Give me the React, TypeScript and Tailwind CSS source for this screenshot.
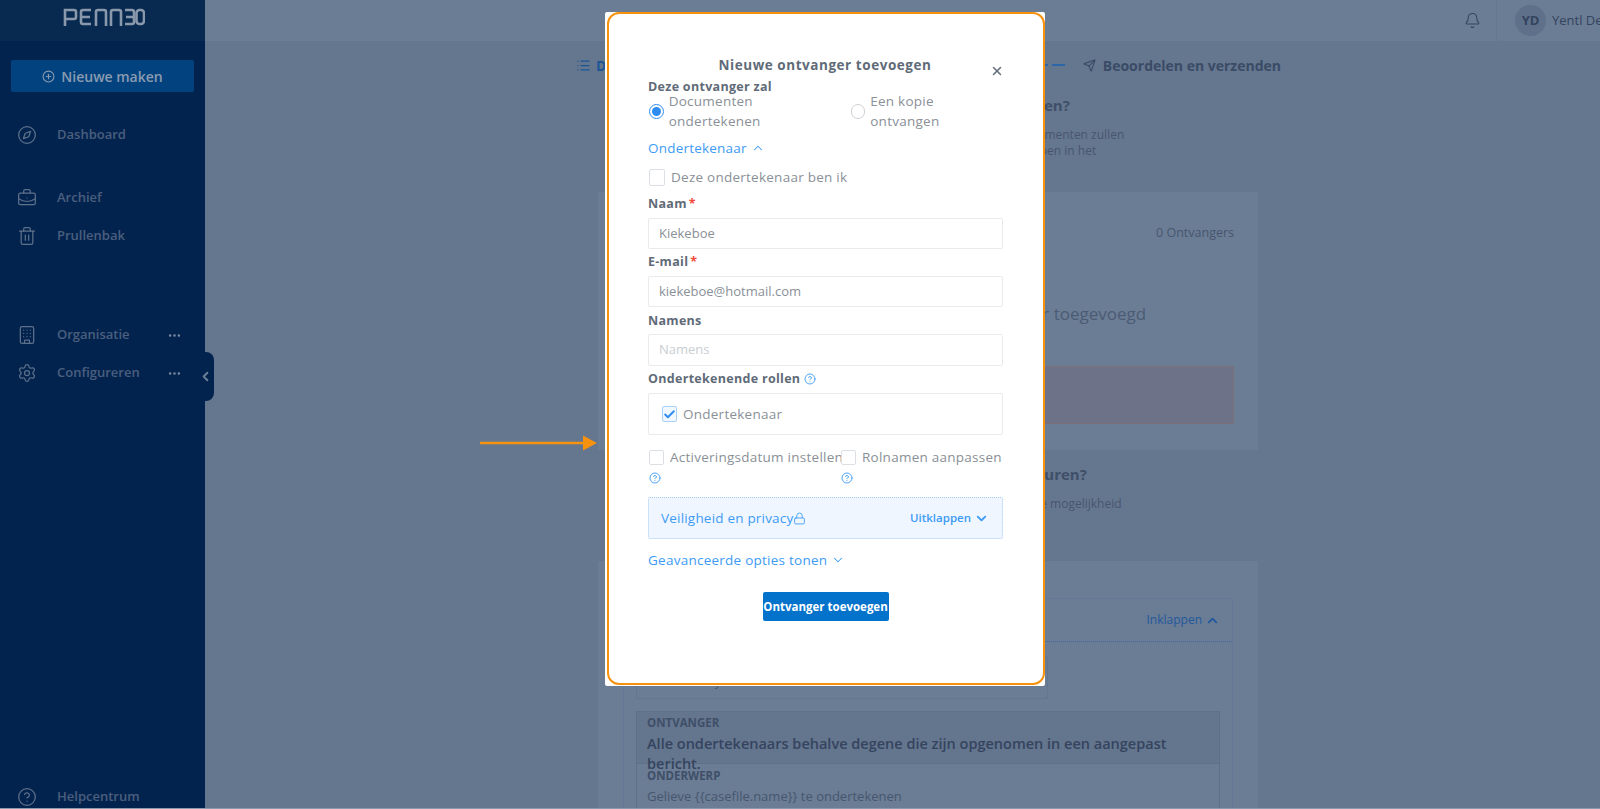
import React from "react";
import {
  Bell,
  BriefcaseBusiness,
  Building,
  Check,
  ChevronDown,
  ChevronLeft,
  ChevronUp,
  CircleHelp,
  CirclePlus,
  Compass,
  Ellipsis,
  List,
  Lock,
  Send,
  Settings,
  Trash2,
  X,
} from "lucide-react";

const Logo = () => (
  <svg width="82" height="18" viewBox="0 0 82 18" fill="none" stroke="#8a98ab" strokeWidth="2.6">
    <path d="M2 18V2h9a2 2 0 0 1 2 2v5a2 2 0 0 1-2 2H2" />
    <path d="M28 2h-8a2 2 0 0 0-2 2v10a2 2 0 0 0 2 2h8M18 9h9" />
    <path d="M33 18V4a2 2 0 0 1 2-2h6a2 2 0 0 1 2 2v14" />
    <path d="M48 18V4a2 2 0 0 1 2-2h6a2 2 0 0 1 2 2v14" />
    <path d="M62 2h7a2 2 0 0 1 2 2v10a2 2 0 0 1-2 2h-7M63 9h7" />
    <rect x="73.5" y="2" width="7.5" height="14" rx="3" />
  </svg>
);

const NavItem = ({
  icon,
  label,
  more,
  className,
}: {
  icon: React.ReactNode;
  label: string;
  more?: boolean;
  className?: string;
}) => (
  <div className={`flex h-5 items-center text-[13px] font-semibold text-[#4a5f7d] ${className ?? ""}`}>
    <span className="flex w-[57px] justify-center pl-[10px] pr-[13px] text-[#5d7089]">{icon}</span>
    <span>{label}</span>
    {more && <Ellipsis size={15} className="ml-auto mr-[23px] text-[#7a899d]" />}
  </div>
);

const Sidebar = () => (
  <aside className="relative z-10 flex w-[205px] shrink-0 flex-col bg-[#03234f]">
    <div className="flex h-[41px] items-center justify-center bg-[#082a50] pb-[8px] pl-[2px]">
      <Logo />
    </div>
    <button className="mx-[11px] mt-[19px] flex h-[32px] items-center justify-center gap-[6px] rounded-[2px] bg-[#02437f] text-[14px] font-semibold text-[#8a9bb0]">
      <CirclePlus size={13} />
      Nieuwe maken
    </button>
    <NavItem className="mt-[33px]" icon={<Compass size={20} strokeWidth={1.5} />} label="Dashboard" />
    <NavItem className="mt-[43px]" icon={<BriefcaseBusiness size={20} strokeWidth={1.5} />} label="Archief" />
    <NavItem className="mt-[18px]" icon={<Trash2 size={20} strokeWidth={1.5} />} label="Prullenbak" />
    <NavItem className="mt-[79px]" icon={<Building size={20} strokeWidth={1.5} />} label="Organisatie" more />
    <NavItem className="mt-[18px]" icon={<Settings size={20} strokeWidth={1.5} />} label="Configureren" more />
    <NavItem className="mt-auto mb-[1px]" icon={<CircleHelp size={20} strokeWidth={1.5} />} label="Helpcentrum" />
    <div className="absolute left-[196px] top-[352px] flex h-[49px] w-[18px] items-center justify-center rounded-r-[8px] bg-[#03234f] text-[#6d7f97]">
      <ChevronLeft size={15} strokeWidth={3} />
    </div>
  </aside>
);

const TopBar = () => (
  <header className="flex h-[41px] shrink-0 items-center bg-[#6b7d95]">
    <Bell size={17} strokeWidth={1.5} className="ml-auto text-[#34445e]" />
    <div className="ml-[15px] flex h-full items-center gap-[6px] border-l border-[#65768f] pl-[18px]">
      <span className="flex h-[31px] w-[31px] items-center justify-center rounded-full bg-[#5f708a] text-[13px] font-bold text-[#34445e]">
        YD
      </span>
      <span className="w-[48px] overflow-hidden whitespace-nowrap text-[13px] text-[#34445e]">Yentl De Smet</span>
    </div>
  </header>
);

const BackgroundContent = () => (
  <div className="ml-[393px] w-[660px] text-[#3f4f68]">
    <div className="relative -left-[22px] mt-[12px] flex h-[24px] w-[705px] items-center text-[14px] font-bold text-[#1a5596]">
      <List size={15} className="mr-[5px]" />
      <span>Documenten</span>
      <div className="ml-auto mr-[18px] flex gap-[4px]">
        <span className="h-[2px] w-[13px] bg-[#2a66a8]" />
        <span className="h-[2px] w-[13px] bg-[#2a66a8]" />
      </div>
      <Send size={13} className="mr-[7px] text-[#3a4b66]" />
      <span className="text-[#3a4b66]">Beoordelen en verzenden</span>
    </div>
    <h2 className="mt-[17px] h-[22px] text-center text-[15px] font-bold leading-[22px]">Wie moet de documenten ontvangen?</h2>
    <p className="mt-[11px] text-center text-[12px] leading-[16px] text-[#47566e]">
      De ontvangers kunnen de documenten zien, en de documenten zullen
      <br />
      worden verzonden naar iedereen die toegang hebben in het
    </p>
    <section className="mt-[33px] h-[258px] bg-[#6b7d95] px-[24px] pt-[33px]">
      <div className="h-[16px] text-right text-[12.5px] leading-[16px] text-[#47566e]">0 Ontvangers</div>
      <div className="mt-[60px] h-[26px] text-center text-[17px] leading-[26px] text-[#4c5b74]">
        Er zijn nog geen ontvangers aan dit dossier toegevoegd
      </div>
      <div className="mt-[39px] h-[58px] rounded-[2px] border border-[#7d6f77] bg-[#6e7289]" />
    </section>
    <h2 className="mt-[13px] h-[22px] text-center text-[15px] font-bold leading-[22px]">Welke berichten wilt u ontvangers sturen?</h2>
    <p className="mt-[11px] text-center text-[12px] leading-[16px] text-[#47566e]">
      U kunt een bericht instellen en de ontvangers krijgen de mogelijkheid
      <br />
      om het bericht aan te passen als ze
    </p>
    <section className="mt-[33px] h-[300px] bg-[#6b7d95] px-[25px] pt-[37px]">
      <div className="h-[280px] rounded-t-[2px] border-x border-t border-[#64779a]">
        <div className="flex h-[43px] items-center justify-end gap-[3px] border-b border-dotted border-[#3f6a9f] pr-[12px] text-[12px] text-[#22589c]">
          Inklappen
          <ChevronUp size={15} strokeWidth={3} />
        </div>
        <div className="px-[12px] pt-[15px]">
          <div className="flex h-[42px] w-[412px] items-center rounded-[2px] border border-[#64758e] px-[10px] pt-[8px] text-[13px] text-[#47566e]">
            Standaardsjabloon
          </div>
          <div className="mt-[12px] border border-[#5f7189]">
            <div className="h-[51px] bg-[#64758e] px-[10px] pt-[3px]">
              <div className="h-[16px] text-[11.5px] font-bold leading-[16px]">ONTVANGER</div>
              <div className="mt-[3px] text-[14.5px] font-semibold leading-[20px] text-[#35445e]">
                Alle ondertekenaars behalve degene die zijn opgenomen in een aangepast bericht.
              </div>
            </div>
            <div className="h-[60px] border-t border-[#5f7189] px-[10px] pt-[4px]">
              <div className="h-[16px] text-[11.5px] font-bold leading-[16px]">ONDERWERP</div>
              <div className="mt-[3px] text-[13px] leading-[18px] text-[#47566e]">Gelieve {"{{casefile.name}}"} te ondertekenen</div>
            </div>
          </div>
        </div>
      </div>
    </section>
  </div>
);

const FieldLabel = ({ children, required, className }: { children: React.ReactNode; required?: boolean; className?: string }) => (
  <div className={`flex h-[18px] items-center gap-[2px] text-[12.5px] font-bold leading-[18px] tracking-[0.3px] text-[#5f6b78] ${className ?? ""}`}>
    {children}
    {required && <span className="text-[#f2493a]">*</span>}
  </div>
);

const TextField = ({ value, placeholder, className }: { value?: string; placeholder?: boolean; className?: string }) => (
  <div
    className={`flex items-center rounded-[2px] border border-[#e8eaec] px-[10px] text-[13px] ${
      placeholder ? "text-[#c9ced3]" : "text-[#8a9097]"
    } ${className ?? ""}`}
  >
    {value}
  </div>
);

const Box = ({ checked, className }: { checked?: boolean; className?: string }) => (
  <span
    className={`flex shrink-0 items-center justify-center rounded-[2px] border ${
      checked ? "border-[#a8d0f8] bg-[#f2f8ff]" : "border-[#dcdfe3] bg-white"
    } ${className ?? ""}`}
  >
    {checked && <Check size={13} strokeWidth={3.5} className="text-[#2f8cf0]" />}
  </span>
);

const Help = ({ className }: { className?: string }) => (
  <CircleHelp size={12} strokeWidth={1.8} className={`text-[#3d9bf5] ${className ?? ""}`} />
);

const RecipientModal = () => (
  <div className="absolute left-[605px] top-[12px] z-20 h-[674px] w-[440px] rounded-[2px] bg-white pl-[43px] pr-[42px] pt-[42px] font-['Open_Sans',sans-serif]">
    <h1 className="h-[22px] pr-[1px] text-center text-[13.5px] font-bold leading-[22px] tracking-[0.55px] text-[#5f6b78]">
      Nieuwe ontvanger toevoegen
    </h1>
    <X size={14} strokeWidth={2.5} className="absolute left-[385px] top-[52px] text-[#5f6b78]" />
    <FieldLabel className="mt-[2px]">Deze ontvanger zal</FieldLabel>
    <div className="mt-[5px] flex h-[20px] items-center text-[13.5px] tracking-[0.25px] text-[#8a9097]">
      <span className="ml-[1px] mr-[5px] flex h-[15px] w-[15px] items-center justify-center rounded-full border-[1.5px] border-[#2f8cf0]">
        <span className="h-[9px] w-[9px] rounded-full bg-[#2f8cf0]" />
      </span>
      <span>Documenten ondertekenen</span>
      <span className="ml-[7px] mr-[5px] h-[15px] w-[15px] rounded-full border-[1.5px] border-[#ccd0d4]" />
      <span>Een kopie ontvangen</span>
    </div>
    <div className="mt-[17px] flex h-[20px] items-center gap-[4px] text-[13.5px] tracking-[0.2px] text-[#3d9bf5]">
      Ondertekenaar
      <ChevronUp size={14} strokeWidth={1.8} />
    </div>
    <div className="mt-[9px] flex h-[20px] items-center text-[13.5px] tracking-[0.25px] text-[#8a9097]">
      <Box className="ml-[1px] mr-[6px] h-[17px] w-[16px]" />
      Deze ondertekenaar ben ik
    </div>
    <FieldLabel required className="mt-[8px]">Naam</FieldLabel>
    <TextField value="Kiekeboe" className="mt-[5px] h-[31px]" />
    <FieldLabel required className="mt-[4px]">E-mail</FieldLabel>
    <TextField value="kiekeboe@hotmail.com" className="mt-[5px] h-[31px]" />
    <FieldLabel className="mt-[5px]">Namens</FieldLabel>
    <TextField value="Namens" placeholder className="mt-[4px] h-[32px]" />
    <FieldLabel className="mt-[4px]">
      Ondertekenende rollen
      <Help className="ml-[2px]" />
    </FieldLabel>
    <div className="mt-[5px] flex h-[42px] items-center rounded-[2px] border border-[#e8eaec] pl-[13px] text-[13.5px] tracking-[0.25px] text-[#8a9097]">
      <Box checked className="mr-[6px] h-[16px] w-[15px]" />
      Ondertekenaar
    </div>
    <div className="mt-[12px] grid grid-cols-[192px_1fr] text-[13.5px] tracking-[0.25px] text-[#8a9097]">
      {["Activeringsdatum instellen", "Rolnamen aanpassen"].map((label) => (
        <div key={label}>
          <div className="flex h-[20px] items-center whitespace-nowrap">
            <Box className="ml-[1px] mr-[6px] h-[15px] w-[15px]" />
            {label}
          </div>
          <Help className="ml-[1px] mt-[5px]" />
        </div>
      ))}
    </div>
    <div className="mt-[13px] flex h-[42px] items-center rounded-[2px] border border-dotted border-[#a9cdf2] bg-[#eff6ff] pl-[12px] pr-[13px] text-[#3d9bf5]">
      <span className="text-[13.5px] tracking-[0.2px]">Veiligheid en privacy</span>
      <Lock size={13} strokeWidth={1.6} />
      <span className="ml-auto text-[11.5px] font-semibold">Uitklappen</span>
      <ChevronDown size={15} strokeWidth={3} className="ml-[3px]" />
    </div>
    <div className="mt-[11px] flex h-[20px] items-center gap-[4px] text-[13.5px] tracking-[0.25px] text-[#3d9bf5]">
      Geavanceerde opties tonen
      <ChevronDown size={14} strokeWidth={1.8} />
    </div>
    <button className="mx-auto mt-[22px] flex h-[29px] w-[126px] items-center justify-center rounded-[2px] bg-[#0272cb] text-[11.5px] font-bold text-white">
      Ontvanger toevoegen
    </button>
    <div className="pointer-events-none absolute bottom-[1.5px] left-[1.5px] right-0 top-0 rounded-[12px] border-[2.5px] border-[#f7920f]" />
  </div>
);

const Arrow = () => (
  <svg className="absolute left-[480px] top-[434px] z-20" width="118" height="18" viewBox="0 0 118 18">
    <path d="M0 9h104" stroke="#f7920f" strokeWidth="2.5" />
    <path d="M103 1.5 117 9l-14 7.5z" fill="#f7920f" />
  </svg>
);

export default function App() {
  return (
    <div className="relative flex h-screen overflow-hidden border-b border-[#8a99ad] bg-[#65768f] font-['Open_Sans',sans-serif]">
      <Sidebar />
      <main className="min-w-0 flex-1 overflow-hidden">
        <TopBar />
        <BackgroundContent />
      </main>
      <Arrow />
      <RecipientModal />
    </div>
  );
}
